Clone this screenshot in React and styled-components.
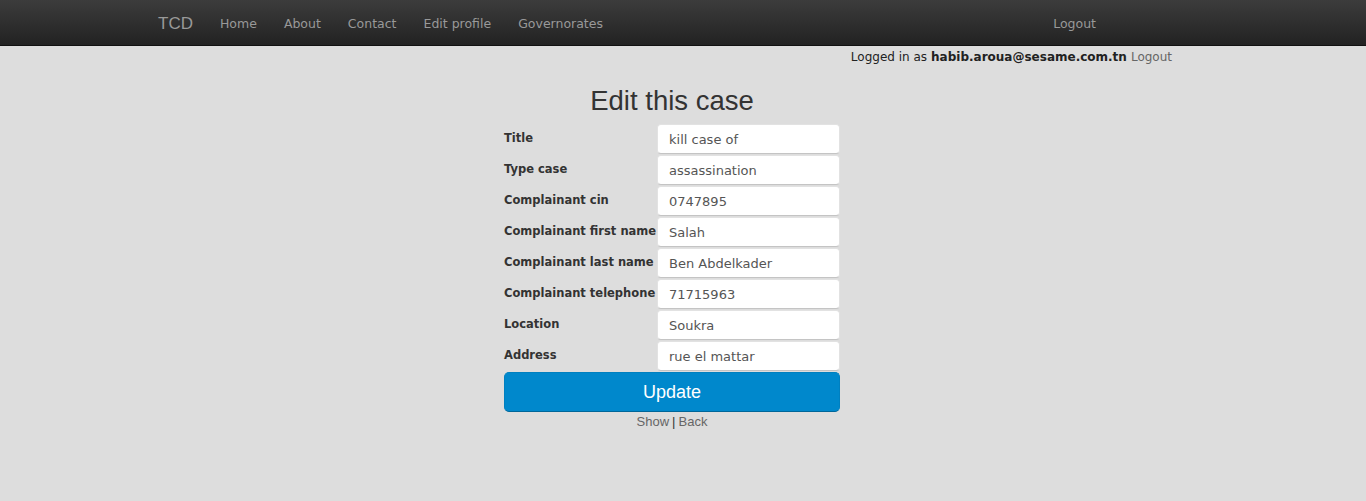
import React from 'react';
import styled, { createGlobalStyle } from 'styled-components';

const GlobalStyle = createGlobalStyle`
  body {
    margin: 0;
    background: #dddddd;
    font-family: "DejaVu Sans", sans-serif;
    color: #333;
  }
`;

const Navbar = styled.div`
  box-sizing: border-box;
  height: 46px;
  padding-top: 2px;
  background: linear-gradient(to bottom, #3c3c3c, #222222);
  border-bottom: 1px solid #111;
  display: flex;
  align-items: center;
  padding-left: 158px;
  padding-right: 270px;
`;

const Brand = styled.a`
  font-family: "Liberation Sans", Arial, sans-serif;
  font-size: 17px;
  color: #999;
  margin-right: 27px;
`;

const NavLink = styled.a`
  font-size: 12.5px;
  color: #999;
  margin-right: ${p => (p.last ? '0' : '27px')};
`;

const Spacer = styled.div`
  flex: 1;
`;

const LoginBar = styled.div`
  display: flex;
  justify-content: flex-end;
  padding-right: 194px;
  font-size: 12px;
  line-height: 20px;
  margin-top: 1px;
  color: #222;

  b {
    margin: 0 4px;
  }
`;

const Muted = styled.a`
  color: #666;
`;

const Main = styled.div`
  display: flex;
  flex-direction: column;
  align-items: center;
  padding-right: 22px;
`;

const Heading = styled.h1`
  font-family: "Liberation Sans", Arial, sans-serif;
  font-weight: normal;
  font-size: 27.5px;
  line-height: 32px;
  margin: 18px 0 7px;
  color: #333;
`;

const Form = styled.div`
  display: grid;
  grid-template-columns: 153px 183px;
  grid-auto-rows: 30px;
  row-gap: 1px;
`;

const Label = styled.label`
  font-size: 11.5px;
  font-weight: bold;
  line-height: 18px;
  padding-top: 5px;
  color: #333;
  white-space: nowrap;
`;

const Input = styled.input`
  box-sizing: border-box;
  width: 183px;
  height: 30px;
  padding: 0 11px;
  border: 1px solid #e2e2e2;
  border-bottom-color: #c4c4c4;
  border-radius: 4px;
  background: #fff;
  font-family: "DejaVu Sans", sans-serif;
  font-size: 13px;
  color: #555;
  outline: none;
`;

const Button = styled.button`
  box-sizing: border-box;
  width: 336px;
  height: 40px;
  margin-top: 1px;
  border: 1px solid #0080c0;
  border-bottom-color: #006699;
  border-radius: 5px;
  background: #0088cc;
  color: #fff;
  font-family: "Liberation Sans", Arial, sans-serif;
  font-size: 18px;
`;

const Links = styled.div`
  font-family: "Liberation Sans", Arial, sans-serif;
  font-size: 13px;
  line-height: 16px;
  margin-top: 2px;
  color: #333;

  span {
    margin: 0 3px;
  }
`;

const fields = [
  ['Title', 'kill case of'],
  ['Type case', 'assassination'],
  ['Complainant cin', '0747895'],
  ['Complainant first name', 'Salah'],
  ['Complainant last name', 'Ben Abdelkader'],
  ['Complainant telephone', '71715963'],
  ['Location', 'Soukra'],
  ['Address', 'rue el mattar'],
];

export default function App() {
  return (
    <>
      <GlobalStyle />
      <Navbar>
        <Brand>TCD</Brand>
        <NavLink>Home</NavLink>
        <NavLink>About</NavLink>
        <NavLink>Contact</NavLink>
        <NavLink>Edit profile</NavLink>
        <NavLink last>Governorates</NavLink>
        <Spacer />
        <NavLink last>Logout</NavLink>
      </Navbar>
      <LoginBar>
        Logged in as <b>habib.aroua@sesame.com.tn</b>
        <Muted>Logout</Muted>
      </LoginBar>
      <Main>
        <Heading>Edit this case</Heading>
        <Form>
          {fields.map(([label, value]) => (
            <React.Fragment key={label}>
              <Label>{label}</Label>
              <Input defaultValue={value} />
            </React.Fragment>
          ))}
        </Form>
        <Button>Update</Button>
        <Links>
          <Muted>Show</Muted>
          <span>|</span>
          <Muted>Back</Muted>
        </Links>
      </Main>
    </>
  );
}
